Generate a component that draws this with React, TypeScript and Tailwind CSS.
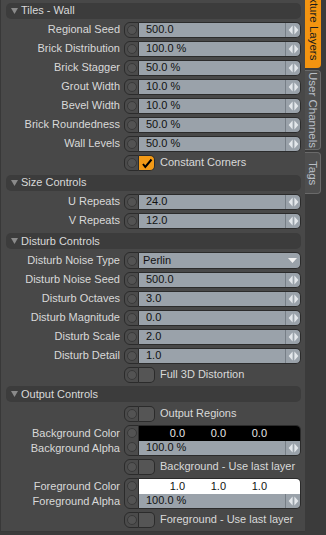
import React from "react";

function Anim() {
  return (
    <div className="w-[15px] h-full shrink-0 rounded-l-[6px] border border-[#2b2b2b] bg-[#4b4b4b] flex items-center justify-center">
      <div className="w-[10px] h-[10px] rounded-full border border-[#393939] bg-[#535353]" />
    </div>
  );
}

function Arrows() {
  return (
    <div className="w-[15px] h-full shrink-0 border-l border-[#767e86] flex items-center justify-center">
      <svg width="11" height="10" viewBox="0 0 11 10">
        <path d="M4.6 0.5 L0.6 5 L4.6 9.5 Z" fill="#e3e7eb" />
        <path d="M6.4 0.5 L10.4 5 L6.4 9.5 Z" fill="#e3e7eb" />
      </svg>
    </div>
  );
}

function Field({ value }: { value: string }) {
  return (
    <div className="flex h-[16px] w-[177px]">
      <Anim />
      <div className="flex-1 flex items-center bg-[#9aa2aa] border border-l-0 border-[#2b2b2b] rounded-r-[5px] overflow-hidden">
        <span className="flex-1 pl-[7px] text-[#111111] whitespace-nowrap">{value}</span>
        <Arrows />
      </div>
    </div>
  );
}

function Dropdown({ value }: { value: string }) {
  return (
    <div className="flex h-[17px] w-[177px]">
      <Anim />
      <div className="flex-1 flex items-center bg-[#9aa2aa] border border-l-0 border-[#2b2b2b] rounded-r-[5px] overflow-hidden">
        <span className="flex-1 pl-[4px] text-[#111111] whitespace-nowrap">{value}</span>
        <div className="w-[15px] flex items-center justify-center">
          <svg width="9" height="5" viewBox="0 0 9 5">
            <path d="M0 0 L9 0 L4.5 5 Z" fill="#f2f2f2" />
          </svg>
        </div>
      </div>
    </div>
  );
}

function Check({ label, checked }: { label: string; checked?: boolean }) {
  return (
    <div className="flex items-center">
      <div className="flex h-[16px] w-[31px]">
        <Anim />
        <div
          className={
            checked
              ? "flex-1 flex items-center justify-center bg-[#f39a16] border border-l-0 border-[#2b2b2b] rounded-r-[5px]"
              : "flex-1 bg-[#555555] border border-l-0 border-[#2b2b2b] rounded-r-[5px]"
          }
        >
          {checked ? (
            <svg width="12" height="12" viewBox="0 0 12 12">
              <path d="M2 7 L4.3 10 L10.5 2.5" stroke="#000000" strokeWidth="2" fill="none" />
            </svg>
          ) : null}
        </div>
      </div>
      <span className="ml-[5px] text-[#d9d9d9] whitespace-nowrap">{label}</span>
    </div>
  );
}

function Row({ label, children }: { label?: string; children: React.ReactNode }) {
  return (
    <div className="h-[19px] flex items-center shrink-0">
      <div className="w-[119px] text-right text-[#d9d9d9] whitespace-nowrap">{label}</div>
      <div className="ml-[4px]">{children}</div>
    </div>
  );
}

function Header({ title, cls }: { title: string; cls: string }) {
  return (
    <div className={"flex items-center shrink-0 " + cls}>
      <div className="ml-[5px] w-[295px] h-[16px] rounded-[5px] bg-[#3c3c3c] flex items-center">
        <svg className="ml-[5px]" width="7" height="6" viewBox="0 0 7 6">
          <path d="M0 0 L7 0 L3.5 6 Z" fill="#8a8a8a" />
        </svg>
        <span className="ml-[3px] text-[#d9d9d9]">{title}</span>
      </div>
    </div>
  );
}

function ColorPair({
  colorLabel,
  alphaLabel,
  values,
  light,
}: {
  colorLabel: string;
  alphaLabel: string;
  values: string[];
  light?: boolean;
}) {
  return (
    <div className="h-[34px] flex items-center shrink-0">
      <div className="w-[119px] flex flex-col text-right text-[#d9d9d9] whitespace-nowrap">
        <div className="h-[16px] leading-[16px]">{colorLabel}</div>
        <div className="h-[15px] leading-[15px]">{alphaLabel}</div>
      </div>
      <div className="ml-[4px] flex h-[31px] w-[177px]">
        <div className="w-[15px] h-full shrink-0 rounded-l-[6px] border border-[#2b2b2b] bg-[#4b4b4b] flex flex-col items-center justify-around">
          <div className="w-[10px] h-[10px] rounded-full border border-[#393939] bg-[#535353]" />
          <div className="w-[10px] h-[10px] rounded-full border border-[#393939] bg-[#535353]" />
        </div>
        <div className="flex-1 flex flex-col border border-l-0 border-[#2b2b2b] rounded-r-[5px] overflow-hidden">
          <div
            className={
              light
                ? "h-[15px] flex items-center bg-[#ffffff] text-[#111111] pl-[5px]"
                : "h-[15px] flex items-center bg-[#000000] text-[#e6e6e6] pl-[5px]"
            }
          >
            {values.map((v, i) => (
              <div key={i} className="w-[41px] text-right">
                {v}
              </div>
            ))}
          </div>
          <div className="flex-1 flex items-center bg-[#9aa2aa]">
            <span className="flex-1 pl-[7px] text-[#111111]">100.0 %</span>
            <Arrows />
          </div>
        </div>
      </div>
    </div>
  );
}

function Tabs() {
  return (
    <div className="w-[21px] h-full bg-[#3b3b3b] overflow-hidden flex flex-col items-start text-[11.5px]">
      <div className="mt-[-22px] w-[16px] h-[90px] shrink-0 bg-[#f39410] rounded-r-[4px] flex items-center justify-center">
        <span className="[writing-mode:vertical-rl] text-[#1c1c1c] whitespace-nowrap">Texture Layers</span>
      </div>
      <div className="mt-[2px] w-[16px] h-[80px] shrink-0 bg-[#4e4e4e] border border-l-0 border-[#6a6a6a] rounded-r-[4px] flex items-center justify-center">
        <span className="[writing-mode:vertical-rl] text-[#b9bec6] whitespace-nowrap">User Channels</span>
      </div>
      <div className="mt-[2px] w-[16px] h-[42px] shrink-0 bg-[#4e4e4e] border border-l-0 border-[#6a6a6a] rounded-r-[4px] flex items-center justify-center">
        <span className="[writing-mode:vertical-rl] text-[#b9bec6] whitespace-nowrap">Tags</span>
      </div>
    </div>
  );
}

export default function App() {
  return (
    <div className="w-[326px] h-[535px] bg-[#3b3b3b] flex font-['Liberation_Sans',Arial,sans-serif] text-[11px] leading-none overflow-hidden">
      <div className="w-[305px] h-[532px] bg-[#484848] border-l border-b border-[#383838] flex flex-col pt-[1px]">
        <Header title="Tiles - Wall" cls="h-[19px]" />
        <Row label="Regional Seed"><Field value="500.0" /></Row>
        <Row label="Brick Distribution"><Field value="100.0 %" /></Row>
        <Row label="Brick Stagger"><Field value="50.0 %" /></Row>
        <Row label="Grout Width"><Field value="10.0 %" /></Row>
        <Row label="Bevel Width"><Field value="10.0 %" /></Row>
        <Row label="Brick Roundedness"><Field value="50.0 %" /></Row>
        <Row label="Wall Levels"><Field value="50.0 %" /></Row>
        <Row><Check label="Constant Corners" checked /></Row>

        <Header title="Size Controls" cls="h-[19px] mt-[1px]" />
        <Row label="U Repeats"><Field value="24.0" /></Row>
        <Row label="V Repeats"><Field value="12.0" /></Row>

        <Header title="Disturb Controls" cls="h-[20px] mt-[1px]" />
        <Row label="Disturb Noise Type"><Dropdown value="Perlin" /></Row>
        <Row label="Disturb Noise Seed"><Field value="500.0" /></Row>
        <Row label="Disturb Octaves"><Field value="3.0" /></Row>
        <Row label="Disturb Magnitude"><Field value="0.0" /></Row>
        <Row label="Disturb Scale"><Field value="2.0" /></Row>
        <Row label="Disturb Detail"><Field value="1.0" /></Row>
        <Row><Check label="Full 3D Distortion" /></Row>

        <Header title="Output Controls" cls="h-[20px]" />
        <Row><Check label="Output Regions" /></Row>
        <ColorPair colorLabel="Background Color" alphaLabel="Background Alpha" values={["0.0", "0.0", "0.0"]} />
        <Row><Check label="Background - Use last layer" /></Row>
        <ColorPair colorLabel="Foreground Color" alphaLabel="Foreground Alpha" values={["1.0", "1.0", "1.0"]} light />
        <Row><Check label="Foreground - Use last layer" /></Row>
      </div>
      <Tabs />
    </div>
  );
}
